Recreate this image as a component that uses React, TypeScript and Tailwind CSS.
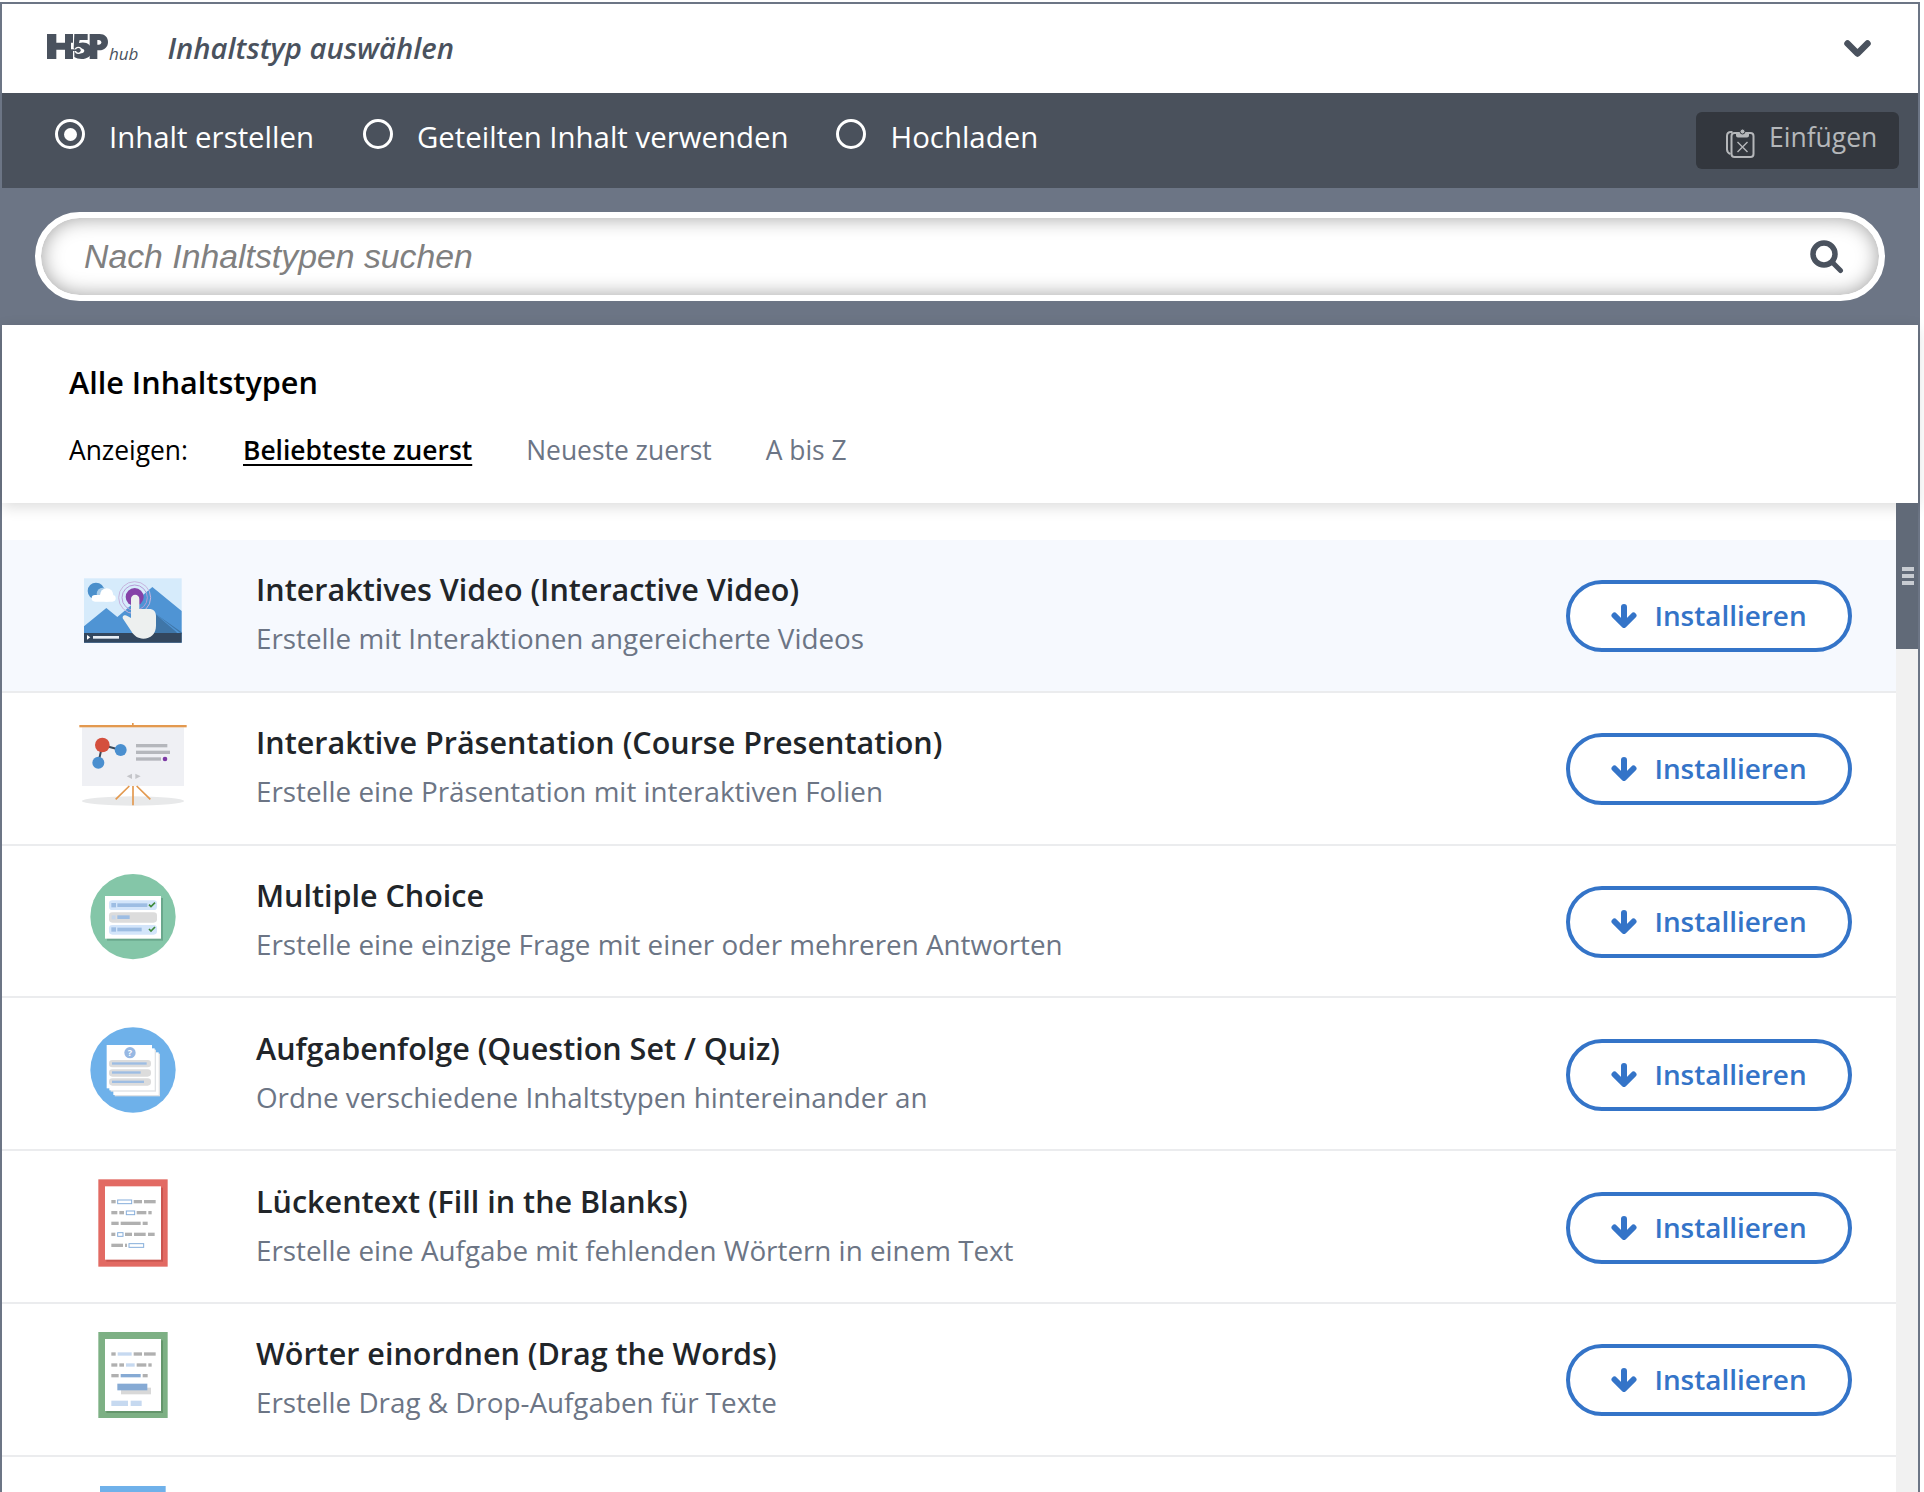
function Logo() {
  return (
    <svg width="61" height="25" viewBox="22 25 183 75" fill="#4a525e" className="shrink-0">
      <path d="M22 25h28v26h26V25h24v26h-6v21h6v28H76V72H50v28H22z" />
      <path d="M104 25h40v18h-24l-2 9c20-6 38 4 38 23 0 16-14 25-30 25-9 0-17-2-22-6v-18c5 5 11 7 18 7 7 0 12-3 12-8 0-7-14-10-28-4l-4-3z" />
      <circle cx="116" cy="74" r="11" fill="#fff" />
      <circle cx="116" cy="74" r="7" />
      <path d="M94 71h20v5H94z" />
      <path d="M150 25h30c15 0 25 9 25 24s-11 25-26 25h-6v26h-23z" />
      <path d="M173 43v14h4c5 0 8-3 8-7s-3-7-8-7z" fill="#fff" />
    </svg>
  );
}

function Chevron() {
  return (
    <svg width="27" height="18" viewBox="0 0 27 18" fill="none" stroke="#4a525e" strokeWidth="6.5" strokeLinecap="round" strokeLinejoin="round" className="mt-[1px] shrink-0">
      <path d="M3.500 3.500l10 10 10-10" />
    </svg>
  );
}

function ArrowDown() {
  return (
    <svg width="26" height="24" viewBox="0 0 26 24" fill="none" stroke="#3474c8" strokeWidth="6" strokeLinecap="round" strokeLinejoin="round" className="shrink-0">
      <path d="M13 3v17M3.500 11.500l9.500 9.500 9.500-9.500" />
    </svg>
  );
}

function SearchIcon() {
  return (
    <svg width="34" height="34" viewBox="0 0 34 34" fill="none" stroke="#4a525e" className="shrink-0">
      <circle cx="14" cy="14" r="11" strokeWidth="5.500" />
      <path d="M22.500 22.500l8 8" strokeWidth="5" strokeLinecap="round" />
    </svg>
  );
}

function PasteIcon() {
  return (
    <svg width="29" height="30" viewBox="0 0 29 30" fill="none" stroke="#b5b7ba" strokeWidth="2" className="mt-[5px] shrink-0">
      <path d="M4.500 26C2 25 1 23.500 1 21.500V8C1 5.500 2.500 4 5 4h1.500" />
      <rect x="5.500" y="5" width="22" height="24" rx="3" />
      <path d="M11 5h11v2.500a1 1 0 0 1-1 1h-9a1 1 0 0 1-1-1z" fill="#b5b7ba" />
      <circle cx="16.500" cy="3.500" r="2.500" fill="#b5b7ba" stroke="#33373e" strokeWidth="1" />
      <path d="M11.500 14l10 10M21.500 14l-10 10" strokeWidth="1.400" />
    </svg>
  );
}

function Radio({ on }: { on?: boolean }) {
  return (
    <span className="mb-[5px] flex h-[30px] w-[30px] shrink-0 items-center justify-center rounded-full border-[3.5px] border-white">
      {on && <span className="h-[13px] w-[13px] rounded-full bg-white" />}
    </span>
  );
}

function VideoIcon() {
  return (
    <svg width="110" height="110" viewBox="84 21 330 330">
      <rect x="102" y="88" width="293" height="193" fill="#d6ebfb" />
      <circle cx="138" cy="126" r="25" fill="#4a8fcb" />
      <circle cx="158" cy="134" r="18" fill="#a9cdea" />
      <rect x="125" y="138" width="72" height="20" rx="10" fill="#fff" />
      <circle cx="170" cy="138" r="20" fill="#fff" />
      <path d="M102 232l67-55 33 27 105-90 88 72v95H102z" fill="#4f94d4" />
      <path d="M310 190l85 65v-5l-85-60zM250 255l60-65 70 60v20H250z" fill="#3f76a8" />
      <circle cx="254" cy="146" r="48" fill="none" stroke="#c7b4dd" strokeWidth="3" />
      <circle cx="254" cy="146" r="38" fill="none" stroke="#b79ad6" strokeWidth="3" />
      <circle cx="254" cy="144" r="27" fill="#8542a8" />
      <rect x="102" y="252" width="293" height="29" fill="#33475e" />
      <path d="M111 258l10 7-10 7z" fill="#fff" />
      <rect x="129" y="261" width="78" height="8" fill="#e7eef5" />
      <path d="M243 150a12 12 0 0 1 25 0v30h30c12 0 20 8 20 20v30c0 24-16 39-38 39-16 0-28-8-36-22l-24-36c-6-7 2-16 12-10l11 6z" fill="#edf0ef" />
    </svg>
  );
}

function PresentationIcon() {
  return (
    <svg width="110" height="110" viewBox="84 477 330 330">
      <ellipse cx="249" cy="753" rx="153" ry="14" fill="#e8e9ea" />
      <rect x="96" y="532" width="306" height="176" fill="#eff0f4" />
      <rect x="88" y="525" width="322" height="7" fill="#e3994f" />
      <rect x="246" y="519" width="5" height="8" fill="#e3994f" />
      <path d="M249 708v58M238 708l-41 40M260 708l41 40" stroke="#e3994f" strokeWidth="5" fill="none" />
      <path d="M157 585l55 15M157 585l-12 53" stroke="#3c4a5a" strokeWidth="6" />
      <circle cx="157" cy="585" r="22" fill="#d44f3d" />
      <circle cx="212" cy="600" r="18" fill="#4a8fcf" />
      <circle cx="145" cy="638" r="18" fill="#4a8fcf" />
      <rect x="258" y="582" width="94" height="10" fill="#b5b7bc" />
      <rect x="258" y="602" width="102" height="10" fill="#b5b7bc" />
      <rect x="258" y="622" width="75" height="10" fill="#b5b7bc" />
      <circle cx="345" cy="627" r="7" fill="#7d3aa5" />
      <path d="M246 671v16l-16-8zM256 671v16l16-8z" fill="#c4c5c9" />
    </svg>
  );
}

function ChoiceIcon() {
  return (
    <svg width="110" height="110" viewBox="84 36 330 330">
      <circle cx="249" cy="200" r="128" fill="#84c6a8" />
      <rect x="171" y="144" width="168" height="128" fill="#6aa78c" />
      <rect x="165" y="138" width="168" height="128" fill="#fff" />
      <rect x="177" y="151" width="144" height="29" rx="10" fill="#d3e5fa" />
      <rect x="177" y="187" width="144" height="31" rx="10" fill="#dcdcdc" />
      <rect x="177" y="225" width="144" height="29" rx="10" fill="#d3e5fa" />
      <rect x="184" y="159" width="14" height="13" fill="#9dbde3" />
      <rect x="202" y="160" width="90" height="11" fill="#9dbde3" />
      <rect x="185" y="196" width="12" height="12" fill="#c5d6ea" />
      <rect x="202" y="196" width="37" height="11" fill="#9dbde3" />
      <rect x="184" y="232" width="14" height="13" fill="#9dbde3" />
      <rect x="202" y="233" width="73" height="11" fill="#9dbde3" />
      <path d="M297 164l6 6 12-12M297 237l6 6 12-12" stroke="#3f8a3a" strokeWidth="5" fill="none" />
    </svg>
  );
}

function QuizIcon() {
  return (
    <svg width="110" height="110" viewBox="84 495 330 330">
      <circle cx="249" cy="660" r="128" fill="#6eb1ea" />
      <rect x="194" y="611" width="136" height="128" fill="#dfe2e5" />
      <rect x="190" y="607" width="136" height="128" fill="#fff" />
      <rect x="182" y="599" width="136" height="126" fill="#dfe2e5" />
      <rect x="178" y="595" width="136" height="126" fill="#fff" />
      <rect x="170" y="585" width="136" height="130" fill="#fff" />
      <circle cx="240" cy="608" r="17" fill="#97b8e3" />
      <text x="240" y="618" textAnchor="middle" fontFamily="Open Sans, sans-serif" fontWeight="700" fontSize="27" fill="#fff">?</text>
      <rect x="177" y="630" width="126" height="22" rx="10" fill="#dcdcdc" />
      <rect x="177" y="658" width="126" height="22" rx="10" fill="#dcdcdc" />
      <rect x="177" y="685" width="126" height="22" rx="10" fill="#dcdcdc" />
      <rect x="186" y="637" width="104" height="7" fill="#9dbde3" />
      <rect x="186" y="664" width="86" height="7" fill="#9dbde3" />
      <rect x="186" y="692" width="96" height="7" fill="#9dbde3" />
    </svg>
  );
}

function BlanksIcon() {
  const g = "#b0b0b0";
  const bars: [number, number, number][] = [
    [184, 125, 13], [251, 125, 25], [282, 125, 35],
    [184, 158, 18], [208, 158, 14], [260, 158, 29], [295, 158, 10],
    [184, 190, 22], [212, 190, 60], [278, 190, 15],
    [184, 223, 12], [225, 223, 21], [252, 223, 35], [294, 223, 20],
    [184, 256, 35], [225, 256, 6],
  ];
  const boxes: [number, number, number][] = [[203, 125, 42], [229, 158, 25], [203, 223, 16], [237, 256, 44]];
  return (
    <svg width="110" height="110" viewBox="84 24 330 330">
      <rect x="145" y="58" width="208" height="262" fill="#e26a63" />
      <rect x="169" y="83" width="170" height="222" fill="#c9554f" />
      <rect x="165" y="79" width="168" height="220" fill="#fff" />
      {bars.map(([x, y, w]) => (
        <rect key={`${x}-${y}`} x={x} y={y - 5} width={w} height="10" fill={g} />
      ))}
      {boxes.map(([x, y, w]) => (
        <rect key={`${x}-${y}`} x={x} y={y - 5} width={w} height="11" fill="#fff" stroke="#86aedb" strokeWidth="3" />
      ))}
    </svg>
  );
}

function WordsIcon() {
  const g = "#b0b0b0";
  const bars: [number, number, number][] = [
    [184, 583, 13], [251, 583, 25], [282, 583, 35],
    [184, 616, 18], [208, 616, 14], [260, 616, 29], [295, 616, 10],
    [184, 648, 22], [278, 648, 15],
  ];
  const blues: [number, number, number, string][] = [
    [203, 583, 42, "#c6d9f0"], [228, 616, 26, "#c6d9f0"], [212, 648, 60, "#86aad4"],
    [184, 731, 50, "#c6d9f0"], [242, 731, 33, "#c6d9f0"],
  ];
  return (
    <svg width="110" height="110" viewBox="84 481 330 330">
      <rect x="145" y="517" width="208" height="258" fill="#7db084" />
      <rect x="169" y="542" width="170" height="218" fill="#64956b" />
      <rect x="165" y="538" width="168" height="216" fill="#fff" />
      {bars.map(([x, y, w]) => (
        <rect key={`${x}-${y}`} x={x} y={y - 5} width={w} height="10" fill={g} />
      ))}
      {blues.map(([x, y, w, c]) => (
        <rect key={`${x}-${y}`} x={x} y={y - (y === 731 ? 8 : 5)} width={w} height={y === 731 ? 16 : 10} fill={c} />
      ))}
      <rect x="213" y="684" width="90" height="20" fill="#d8d8d8" />
      <rect x="202" y="672" width="90" height="20" fill="#86aad4" />
    </svg>
  );
}

function LastIcon() {
  return (
    <svg width="110" height="110" viewBox="84 939 330 330">
      <rect x="150" y="975" width="197" height="200" fill="#6fb1ea" />
    </svg>
  );
}

const rows = [
  { icon: <VideoIcon />, title: "Interaktives Video (Interactive Video)", desc: "Erstelle mit Interaktionen angereicherte Videos" },
  { icon: <PresentationIcon />, title: "Interaktive Präsentation (Course Presentation)", desc: "Erstelle eine Präsentation mit interaktiven Folien" },
  { icon: <ChoiceIcon />, title: "Multiple Choice", desc: "Erstelle eine einzige Frage mit einer oder mehreren Antworten" },
  { icon: <QuizIcon />, title: "Aufgabenfolge (Question Set / Quiz)", desc: "Ordne verschiedene Inhaltstypen hintereinander an" },
  { icon: <BlanksIcon />, title: "Lückentext (Fill in the Blanks)", desc: "Erstelle eine Aufgabe mit fehlenden Wörtern in einem Text" },
  { icon: <WordsIcon />, title: "Wörter einordnen (Drag the Words)", desc: "Erstelle Drag & Drop-Aufgaben für Texte" },
];

export default function App() {
  return (
    <div className="h-[1492px] w-[1924px] overflow-hidden bg-white pt-[2px] font-['Open_Sans',sans-serif]">
      <div className="flex h-[1490px] w-[1920px] flex-col border-x-2 border-t-2 border-[#6c7585]">
        <header className="flex h-[89px] shrink-0 items-center justify-between pl-[45px] pr-[47px]">
          <div className="flex items-center">
            <div className="mb-[4px]">
              <Logo />
            </div>
            <span className="ml-[1px] mt-[10px] text-[17px] font-medium italic text-[#4a525e]">hub</span>
            <span className="ml-[29px] text-[29.25px] font-semibold italic text-[#4a525e]">Inhaltstyp auswählen</span>
          </div>
          <Chevron />
        </header>

        <nav className="flex h-[95px] shrink-0 items-center justify-between bg-[#4a515c] pl-[53px] pr-[19px] text-white">
          <div className="flex items-center pb-[7px] text-[29.4px]">
            <Radio on />
            <span className="ml-[24px]">Inhalt erstellen</span>
            <span className="ml-[49px]">
              <Radio />
            </span>
            <span className="ml-[24px]">Geteilten Inhalt verwenden</span>
            <span className="ml-[48px]">
              <Radio />
            </span>
            <span className="ml-[24px]">Hochladen</span>
          </div>
          <button className="flex h-[57px] w-[203px] items-center gap-[14px] rounded-[6px] bg-[#33373e] pl-[30px] text-[26.5px] text-[#b5b7ba]">
            <PasteIcon />
            <span className="mb-[6px]">Einfügen</span>
          </button>
        </nav>

        <div className="shrink-0 bg-[#6c7585] px-[33px] py-[24px]">
          <div className="flex h-[89px] items-center justify-between rounded-full border-[6px] border-white bg-white pl-[43px] pr-[35px] shadow-[inset_0_0_20px_rgba(0,0,0,0.38)]">
            <span className="font-['Liberation_Sans',sans-serif] text-[33.8px] italic text-[#808080]">Nach Inhaltstypen suchen</span>
            <SearchIcon />
          </div>
        </div>

        <section className="relative z-10 h-[178px] shrink-0 bg-white pl-[67px] shadow-[0_4px_14px_rgba(0,0,0,0.14)]">
          <h2 className="pt-[36px] text-[30.6px] font-semibold leading-[42px] text-black">Alle Inhaltstypen</h2>
          <div className="mt-[28px] flex items-center text-[26.4px] leading-[38px] text-[#6c7585]">
            <span className="text-black">Anzeigen:</span>
            <span className="ml-[55px] font-semibold text-black underline decoration-2 underline-offset-[4px]">Beliebteste zuerst</span>
            <span className="ml-[54px]">Neueste zuerst</span>
            <span className="ml-[54px]">A bis Z</span>
          </div>
        </section>

        <div className="flex min-h-0 flex-1">
          <main className="flex-1 pt-[37px]">
            {rows.map((r, i) => (
              <div
                key={r.title}
                className={`flex h-[152.8px] items-center border-b-2 border-[#ebecee] ${i === 0 ? "bg-[#f6f9fe]" : "bg-white"}`}
              >
                <div className="mb-[8px] ml-[76px] h-[110px] w-[110px] shrink-0">{r.icon}</div>
                <div className="ml-[68px] min-w-0 flex-1 pb-[5px]">
                  <div className="text-[30.5px] font-semibold leading-[42px] text-[#212529]">{r.title}</div>
                  <div className="mt-[9px] text-[27.8px] leading-[38px] text-[#6c7585]">{r.desc}</div>
                </div>
                <button className="mr-[44px] mt-[2px] flex h-[72px] w-[286px] shrink-0 items-center justify-center gap-[17px] rounded-full border-4 border-[#3474c8] bg-white text-[27.9px] font-semibold text-[#3474c8]">
                  <ArrowDown />
                  Installieren
                </button>
              </div>
            ))}
            <div className="h-[110px] pl-[76px] pt-[17px]">
              <LastIcon />
            </div>
          </main>
          <aside className="relative z-20 w-[22px] shrink-0 bg-[#f1f1f1]">
            <div className="flex h-[146px] flex-col items-center justify-center gap-[3px] bg-[#616a78] pl-[2px]">
              <span className="h-[4px] w-[12px] bg-[#c8ccd2]" />
              <span className="h-[4px] w-[12px] bg-[#c8ccd2]" />
              <span className="h-[4px] w-[12px] bg-[#c8ccd2]" />
            </div>
          </aside>
        </div>
      </div>
    </div>
  );
}
